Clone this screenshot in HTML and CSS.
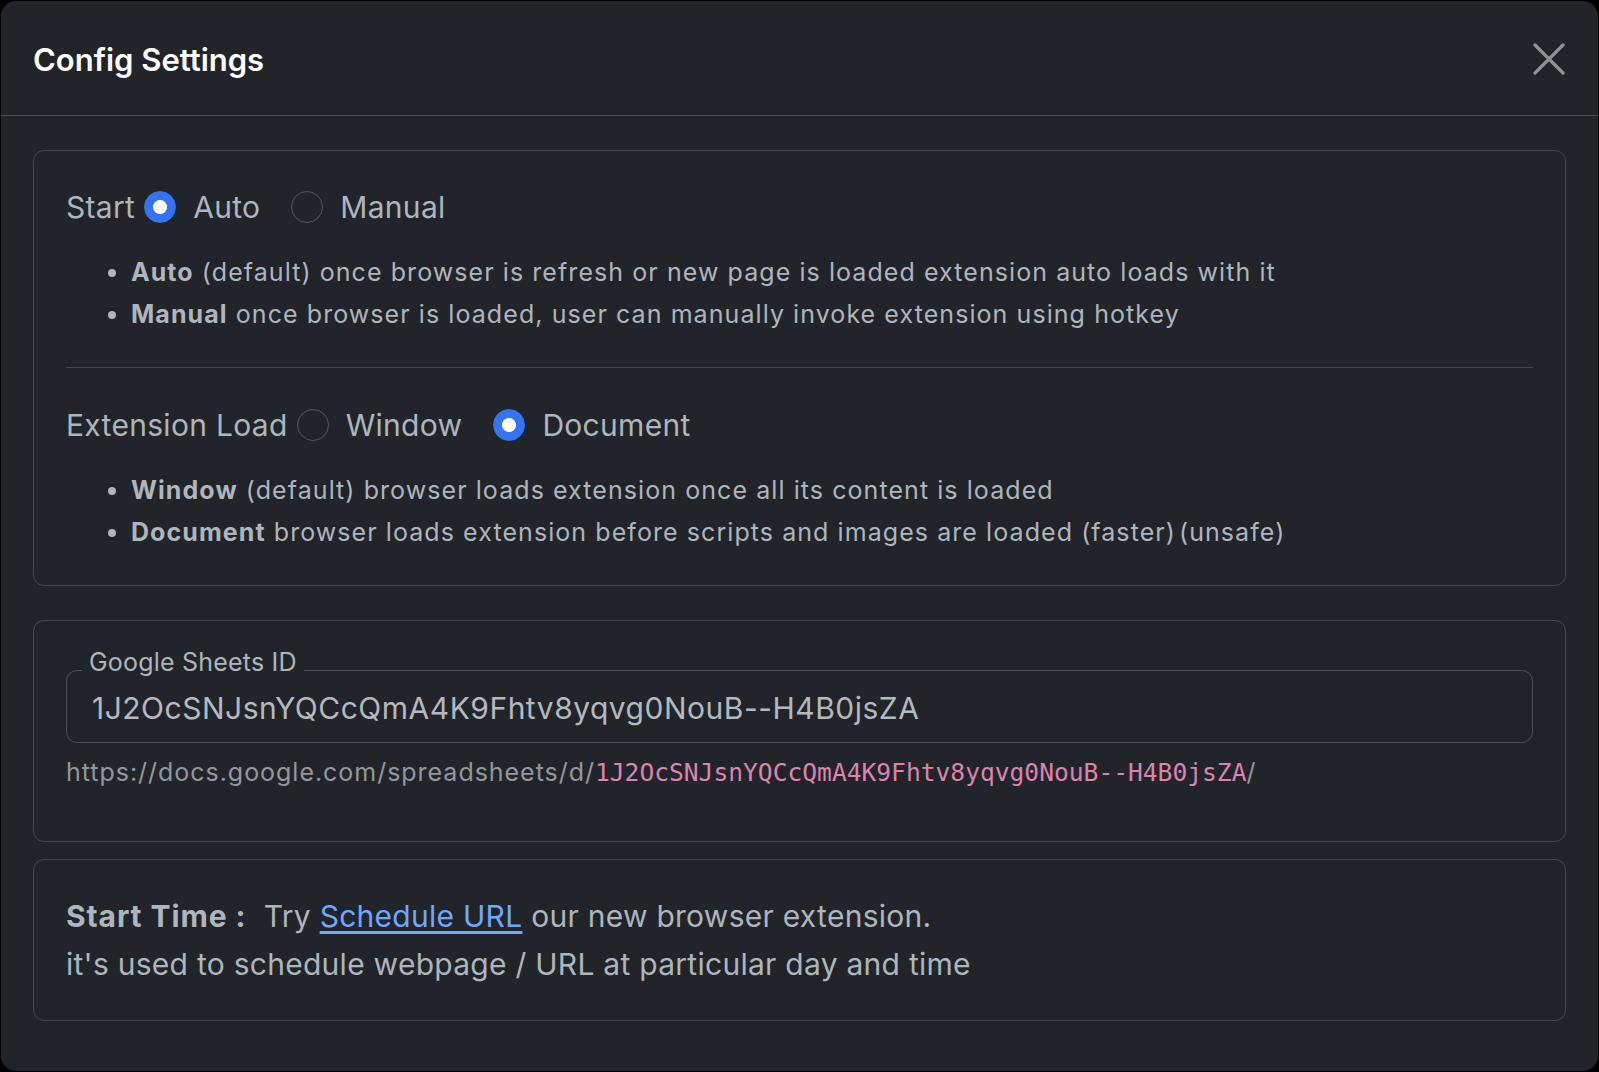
FILE: index.html
```html
<!DOCTYPE html>
<html lang="en">
<head>
<meta charset="utf-8">
<title>Config Settings</title>
<link rel="stylesheet" href="styles.css">
</head>
<body>
<div class="modal">
  <header class="modal-header">
    <h5 class="modal-title">Config Settings</h5>
    <button class="btn-close" type="button" aria-label="Close">
      <svg width="32" height="32" viewBox="0 0 32 32" aria-hidden="true">
        <path d="M2 2 L30 30 M30 2 L2 30" stroke="#8f9194" stroke-width="3.2" stroke-linecap="round" fill="none"/>
      </svg>
    </button>
  </header>
  <main class="modal-body">
    <section class="card">
      <div class="radio-row">
        <span class="row-label">Start</span>
        <label class="check first"><input type="radio" name="start" checked><span>Auto</span></label>
        <label class="check"><input type="radio" name="start"><span>Manual</span></label>
      </div>
      <ul class="notes">
        <li><strong>Auto</strong> (default) once browser is refresh or new page is loaded extension auto loads with it</li>
        <li><strong>Manual</strong> once browser is loaded, user can manually invoke extension using hotkey</li>
      </ul>
      <hr class="divider">
      <div class="radio-row">
        <span class="row-label">Extension Load</span>
        <label class="check first"><input type="radio" name="load"><span>Window</span></label>
        <label class="check"><input type="radio" name="load" checked><span>Document</span></label>
      </div>
      <ul class="notes">
        <li><strong>Window</strong> (default) browser loads extension once all its content is loaded</li>
        <li><strong>Document</strong> browser loads extension before scripts and images are loaded (faster)<span class="unsafe">(unsafe)</span></li>
      </ul>
    </section>

    <section class="card card-sheet">
      <fieldset class="field">
        <legend class="field-label">Google Sheets ID</legend>
        <div class="field-value">1J2OcSNJsnYQCcQmA4K9Fhtv8yqvg0NouB--H4B0jsZA</div>
      </fieldset>
      <div class="sheet-url">https://docs.google.com/spreadsheets/d/<code class="sheet-id">1J2OcSNJsnYQCcQmA4K9Fhtv8yqvg0NouB--H4B0jsZA</code>/</div>
    </section>

    <section class="card card-promo">
      <p class="promo"><strong>Start Time :</strong>&nbsp; Try <a href="#" class="promo-link">Schedule URL</a> our new browser extension.</p>
      <p class="promo">it's used to schedule webpage / URL at particular day and time</p>
    </section>
  </main>
</div>
</body>
</html>
```
FILE: styles.css
```css
* { box-sizing: border-box; }

html, body {
  margin: 0;
  padding: 0;
  background: #000;
  height: 1072px;
  overflow: hidden;
}

body {
  font-family: Inter, "Noto Sans", "Liberation Sans", sans-serif;
  color: #adb5bd;
}

.modal {
  margin: 1px;
  height: 1070px;
  background: #212529;
  border-radius: 15px;
  overflow: hidden;
}

.modal-header {
  height: 115px;
  border-bottom: 1px solid #494e53;
  display: flex;
  align-items: center;
  justify-content: space-between;
  padding: 2px 33px 0 32px;
}

.modal-title {
  margin: 0;
  font-size: 31px;
  font-weight: 600;
  color: #fff;
  letter-spacing: 0;
}

.btn-close {
  background: none;
  border: 0;
  padding: 0;
  width: 32px;
  height: 32px;
  display: flex;
  cursor: pointer;
}

.modal-body {
  padding: 34px 32px 0 32px;
}

.card {
  border: 1px solid #45494e;
  border-radius: 11px;
  padding: 32px;
}

.radio-row {
  display: flex;
  align-items: center;
  height: 48px;
  font-size: 30px;
  letter-spacing: 0.3px;
  color: #adb5bd;
}

.check {
  display: flex;
  align-items: center;
  margin-left: 31px;
}

.check.first { margin-left: 9px; }

.check span { margin-left: 17px; }

.check input {
  appearance: none;
  -webkit-appearance: none;
  margin: 0;
  width: 32px;
  height: 32px;
  border-radius: 50%;
  border: 1.6px solid #52575d;
  background: transparent;
  flex: none;
}

.check input:checked {
  border-color: #3474f2;
  background: radial-gradient(circle, #fff 0 6.6px, #3474f2 7.4px);
}

.notes {
  margin: 20px 0 0 0;
  padding-left: 65px;
  font-size: 25px;
  letter-spacing: 1.07px;
  line-height: 42px;
  color: #adb5bd;
}

.notes strong { font-weight: 700; }

.unsafe { margin-left: 3px; }

.divider {
  border: 0;
  border-top: 1px solid #45494e;
  margin: 32px 0 33px 0;
  opacity: 1;
}

.card-sheet {
  margin-top: 34px;
  padding-top: 24px;
  padding-bottom: 50px;
}

.field {
  margin: 0;
  padding: 0 24px 21px 0;
  border: 1px solid #4c5157;
  border-radius: 11px;
  min-width: 0;
}

.field-label {
  margin-left: 15px;
  padding: 0 7px 16px 7px;
  font-size: 25px;
  letter-spacing: 0.2px;
  line-height: 34px;
  color: #adb5bd;
}

.field-value {
  padding-left: 25px;
  font-size: 30px;
  letter-spacing: 0.5px;
  line-height: 26px;
  color: #b3b9bf;
}

.sheet-url {
  margin-top: 11px;
  font-size: 25px;
  letter-spacing: 0.97px;
  line-height: 36px;
  color: #92979d;
}

.sheet-id {
  font-family: "DejaVu Sans Mono", "Liberation Mono", monospace;
  font-size: 24.6px;
  letter-spacing: 0;
  color: #dc83af;
}

.card-promo {
  margin-top: 17px;
}

.promo {
  margin: 0;
  font-size: 30px;
  letter-spacing: 0.27px;
  line-height: 48px;
  color: #adb5bd;
}

.promo strong {
  font-weight: 700;
  letter-spacing: 0.9px;
}

.promo-link {
  color: #6ea8fe;
  text-decoration: underline;
  text-underline-offset: 4px;
}
```
